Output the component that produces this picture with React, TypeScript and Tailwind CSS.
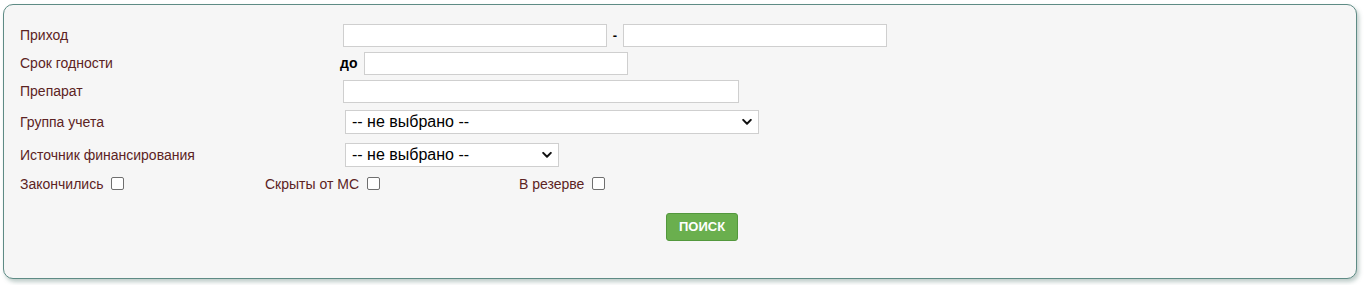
import React from 'react';

const labelCls = "text-[14px] text-[#5c2323] leading-none";
const inputCls = "h-[23px] bg-white border border-[#cfcfcf] outline-none px-1 text-[14px]";

function Chevron() {
  return (
    <svg width="10" height="7" viewBox="0 0 10 7" className="absolute right-[7px] top-1/2 -translate-y-1/2 pointer-events-none">
      <path d="M1.2 1.4 L5 5.2 L8.8 1.4" fill="none" stroke="#111" strokeWidth="2" strokeLinecap="round" strokeLinejoin="round" />
    </svg>
  );
}

function Select({ width }: { width: string }) {
  return (
    <div className={`relative ml-[2px] ${width} h-[24px]`}>
      <select className="appearance-none w-full h-full bg-white border border-[#cfcfcf] pl-[6px] text-[16px] text-black outline-none leading-none">
        <option>-- не выбрано --</option>
      </select>
      <Chevron />
    </div>
  );
}

function Check({ label, width }: { label: string; width: string }) {
  return (
    <label className={`flex items-center ${width}`}>
      <span className={labelCls}>{label}</span>
      <input
        type="checkbox"
        className="appearance-none ml-[8px] w-[13px] h-[13px] border border-[#6f6f6f] rounded-[2px] bg-white"
      />
    </label>
  );
}

export default function App() {
  return (
    <div className="w-[1365px] h-[285px] bg-white pt-[4px] pl-[3px] font-['Liberation_Sans',Arial,sans-serif]">
      <div className="w-[1354px] h-[275px] bg-[#f6f6f6] border border-[#5e8b85] rounded-[10px] shadow-[2px_3px_4px_rgba(70,110,100,0.35)] pl-[16px] pt-[19px]">
        <div className="flex items-center h-[23px]">
          <div className={`w-[323px] ${labelCls} -mt-[1px]`}>Приход</div>
          <input className={`${inputCls} w-[264px]`} />
          <span className="w-[16px] text-center text-[13px] font-bold text-black">-</span>
          <input className={`${inputCls} w-[264px]`} />
        </div>

        <div className="flex items-center h-[23px] mt-[5px]">
          <div className={`w-[320px] ${labelCls} -mt-[1px]`}>Срок годности</div>
          <span className="w-[18px] text-[14px] font-bold text-black">до</span>
          <input className={`${inputCls} w-[264px] ml-[6px]`} />
        </div>

        <div className="flex items-center h-[23px] mt-[5px]">
          <div className={`w-[323px] ${labelCls} -mt-[1px]`}>Препарат</div>
          <input className={`${inputCls} w-[396px]`} />
        </div>

        <div className="flex items-center h-[24px] mt-[7px]">
          <div className={`w-[323px] ${labelCls} -mt-[1px]`}>Группа учета</div>
          <Select width="w-[414px]" />
        </div>

        <div className="flex items-center h-[24px] mt-[9px]">
          <div className={`w-[323px] ${labelCls} -mt-[1px]`}>Источник финансирования</div>
          <Select width="w-[214px]" />
        </div>

        <div className="flex items-center h-[13px] mt-[10px]">
          <Check label="Закончились" width="w-[245px]" />
          <Check label="Скрыты от МС" width="w-[254px]" />
          <Check label="В резерве" width="w-[120px]" />
        </div>

        <div className="mt-[23px] ml-[646px]">
          <button className="w-[72px] h-[28px] bg-[#6aaf4e] border border-[#53983d] rounded-[3px] text-white text-[13px] font-bold">
            ПОИСК
          </button>
        </div>
      </div>
    </div>
  );
}
